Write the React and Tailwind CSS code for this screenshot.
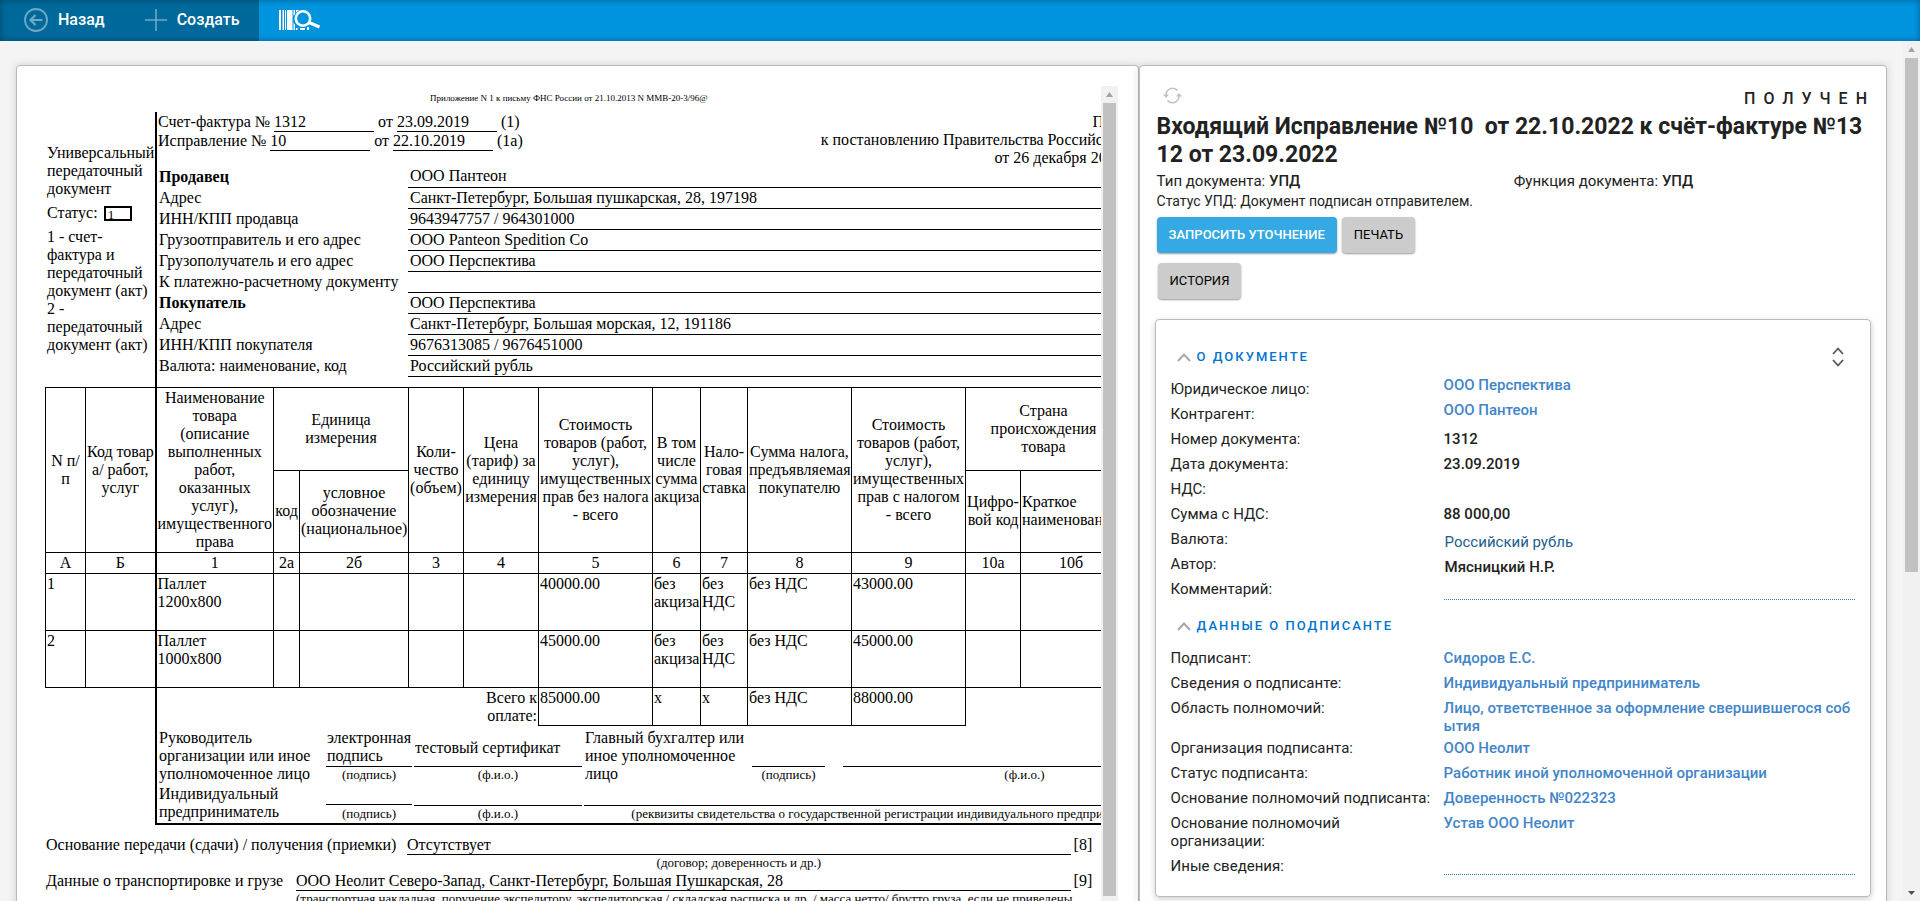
import { Fragment } from "react";
import clsx from "clsx";

const parties = [
  { label: "Продавец", value: "ООО Пантеон", bold: true },
  { label: "Адрес", value: "Санкт-Петербург, Большая пушкарская, 28, 197198" },
  { label: "ИНН/КПП продавца", value: "9643947757 / 964301000" },
  { label: "Грузоотправитель и его адрес", value: "ООО Panteon Spedition Co" },
  { label: "Грузополучатель и его адрес", value: "ООО Перспектива" },
  { label: "К платежно-расчетному документу", value: "" },
  { label: "Покупатель", value: "ООО Перспектива", bold: true },
  { label: "Адрес", value: "Санкт-Петербург, Большая морская, 12, 191186" },
  { label: "ИНН/КПП покупателя", value: "9676313085 / 9676451000" },
  { label: "Валюта: наименование, код", value: "Российский рубль" },
];

const columnWidths = [40, 70, 118, 26, 109, 55, 75, 114, 48, 47, 104, 114, 55, 101, 85];
const columnCodes = ["А", "Б", "1", "2а", "2б", "3", "4", "5", "6", "7", "8", "9", "10а", "10б", "11"];

const goods = [
  ["1", "", "Паллет\n1200x800", "", "", "", "", "40000.00", "без\nакциза", "без\nНДС", "без НДС", "43000.00", "", "", ""],
  ["2", "", "Паллет\n1000x800", "", "", "", "", "45000.00", "без\nакциза", "без\nНДС", "без НДС", "45000.00", "", "", ""],
];

const totals = ["85000.00", "x", "x", "без НДС", "88000.00"];

const documentFields = [
  { label: "Юридическое лицо:", value: "ООО Перспектива", kind: "company" },
  { label: "Контрагент:", value: "ООО Пантеон", kind: "company" },
  { label: "Номер документа:", value: "1312", kind: "text" },
  { label: "Дата документа:", value: "23.09.2019", kind: "text" },
  { label: "НДС:", value: "", kind: "text" },
  { label: "Сумма с НДС:", value: "88 000,00", kind: "text" },
  { label: "Валюта:", value: "Российский рубль", kind: "currency" },
  { label: "Автор:", value: "Мясницкий Н.Р.", kind: "author" },
];

const signerFields = [
  { label: "Подписант:", value: "Сидоров Е.С." },
  { label: "Сведения о подписанте:", value: "Индивидуальный предприниматель" },
  { label: "Область полномочий:", value: "Лицо, ответственное за оформление свершившегося события" },
  { label: "Организация подписанта:", value: "ООО Неолит" },
  { label: "Статус подписанта:", value: "Работник иной уполномоченной организации" },
  { label: "Основание полномочий подписанта:", value: "Доверенность №022323" },
  { label: "Основание полномочий организации:", value: "Устав ООО Неолит" },
];

function Header() {
  return (
    <header className="relative flex h-[41px] shrink-0 bg-[#0094de] text-white">
      <div className="flex w-[259px] items-center bg-[#00699b] pb-px">
        <button type="button" className="flex items-center gap-[10px] pl-6 text-base font-medium">
          <svg width="24" height="24" viewBox="0 0 24 24" fill="none" stroke="#6fa9c6">
            <circle cx="12" cy="12" r="11" strokeWidth="1.8" />
            <path d="M18.5 12H7M11.5 7L6.5 12l5 5" strokeWidth="2.2" />
          </svg>
          Назад
        </button>
        <button type="button" className="flex items-center gap-[10px] pl-10 text-base font-medium">
          <svg width="22" height="22" viewBox="0 0 22 22" fill="none" stroke="#6fa9c6" strokeWidth="1.6">
            <path d="M11 0v22M0 11h22" />
          </svg>
          Создать
        </button>
      </div>
      <button type="button" aria-label="Поиск по штрихкоду" className="pb-px pl-5">
        <svg width="42" height="22" viewBox="0 0 42 22" fill="none">
          <path d="M0 1h2v20H0zM3.500 1h1.500v20H3.500zM6 1h1v20H6zM8 1h5.500v20H8zM14.500 1H16v4l-1.500 2zM14.500 13l1.500 3v5h-1.500zM17 1h3l-3 2.500zM17 19h1.500v2H17zM21 19h5v2h-5zM28 18h2v3h-2z" fill="#fff" />
          <circle cx="24" cy="9.5" r="7.2" stroke="#fff" strokeWidth="2.6" />
          <path d="M30 13.500l10.500 4.500" stroke="#fff" strokeWidth="3" />
        </svg>
      </button>
      <div className="pointer-events-none absolute inset-0 shadow-[inset_0_0_6px_rgba(0,0,0,0.35)]" />
    </header>
  );
}

function ScrollArrow({ down, color }) {
  return (
    <svg width="17" height="17" viewBox="0 0 17 17" className="shrink-0" fill={color}>
      <path d={down ? "M5 7h7l-3.5 4z" : "M5 11h7L8.5 6z"} />
    </svg>
  );
}

function UnderlinedField({ children }) {
  return <span className="h-[19px] w-[100px] border-b border-black">{children}</span>;
}

function Caption({ children, className }) {
  return <div className={clsx("text-center text-[13px] leading-[15px]", className)}>{children}</div>;
}

function InvoiceHead() {
  return (
    <div className="flex">
      <div className="flex w-[110px] shrink-0 flex-col justify-center pl-[2px]">
        <p className="whitespace-pre">{"Универсальный\nпередаточный\nдокумент"}</p>
        <div className="flex h-[30px] items-center gap-[6px]">
          Статус:
          <span className="h-[15px] w-7 border-2 border-black pl-[2px] text-[13px] leading-[13px]">1</span>
        </div>
        <p className="whitespace-pre">{"1 - счет-\nфактура и\nпередаточный\nдокумент (акт)\n2 -\nпередаточный\nдокумент (акт)"}</p>
      </div>
      <div className="flex-1 border-l-2 border-black pb-[10px]">
        <div className="flex h-[54px] justify-between pt-px pl-px">
          <div>
            <div className="flex gap-1">
              Счет-фактура № <UnderlinedField>1312</UnderlinedField> от{" "}
              <UnderlinedField>23.09.2019</UnderlinedField> (1)
            </div>
            <div className="flex gap-1">
              Исправление № <UnderlinedField>10</UnderlinedField> от{" "}
              <UnderlinedField>22.10.2019</UnderlinedField> (1а)
            </div>
          </div>
          <div className="text-right">
            <p>Приложение N 1</p>
            <p>к постановлению Правительства Российской Федерации</p>
            <p>от 26 декабря 2011 года N 1137</p>
          </div>
        </div>
        <table className="w-full">
          <tbody>
            {parties.map((row, i) => (
              <tr key={i}>
                <th className={clsx("w-[251px] py-px pl-[2px] text-left", row.bold ? "font-bold" : "font-normal")}>
                  {row.label}
                </th>
                <td className="h-[21px] border-b border-black py-px pl-[2px]">{row.value}</td>
              </tr>
            ))}
          </tbody>
        </table>
      </div>
    </div>
  );
}

function HeadCell({ children, className, ...rest }) {
  return (
    <th className={clsx("border border-black p-px font-normal whitespace-pre", className)} {...rest}>
      {children}
    </th>
  );
}

function GoodsTable() {
  return (
    <table className="w-full table-fixed border-collapse">
      <colgroup>
        {columnWidths.map((width, i) => (
          <col key={i} style={{ width }} />
        ))}
      </colgroup>
      <thead>
        <tr className="h-[83px]">
          <HeadCell rowSpan={2}>{"N п/\nп"}</HeadCell>
          <HeadCell rowSpan={2}>{"Код товар\nа/ работ,\nуслуг"}</HeadCell>
          <HeadCell rowSpan={2} className="border-l-2">
            {"Наименование\nтовара\n(описание\nвыполненных\nработ,\nоказанных\nуслуг),\nимущественного\nправа"}
          </HeadCell>
          <HeadCell colSpan={2}>{"Единица\nизмерения"}</HeadCell>
          <HeadCell rowSpan={2}>{"Коли-\nчество\n(объем)"}</HeadCell>
          <HeadCell rowSpan={2}>{"Цена\n(тариф) за\nединицу\nизмерения"}</HeadCell>
          <HeadCell rowSpan={2}>{"Стоимость\nтоваров (работ,\nуслуг),\nимущественных\nправ без налога\n- всего"}</HeadCell>
          <HeadCell rowSpan={2}>{"В том\nчисле\nсумма\nакциза"}</HeadCell>
          <HeadCell rowSpan={2}>{"Нало-\nговая\nставка"}</HeadCell>
          <HeadCell rowSpan={2}>{"Сумма налога,\nпредъявляемая\nпокупателю"}</HeadCell>
          <HeadCell rowSpan={2}>{"Стоимость\nтоваров (работ,\nуслуг),\nимущественных\nправ с налогом\n- всего"}</HeadCell>
          <HeadCell colSpan={2}>{"Страна\nпроисхождения\nтовара"}</HeadCell>
          <HeadCell rowSpan={2}>{"Номер\nтаможенной\nдекларации"}</HeadCell>
        </tr>
        <tr className="h-[82px]">
          <HeadCell>код</HeadCell>
          <HeadCell>{"условное\nобозначение\n(национальное)"}</HeadCell>
          <HeadCell>{"Цифро-\nвой код"}</HeadCell>
          <HeadCell className="text-left">{"Краткое\nнаименование"}</HeadCell>
        </tr>
        <tr>
          {columnCodes.map((code, i) => (
            <HeadCell key={code} className={i === 2 && "border-l-2"}>
              {code}
            </HeadCell>
          ))}
        </tr>
      </thead>
      <tbody>
        {goods.map((row) => (
          <tr key={row[0]} className="h-[57px]">
            {row.map((cell, i) => (
              <td
                key={i}
                className={clsx("border border-black p-px align-top whitespace-pre", i === 2 && "border-l-2")}
              >
                {cell}
              </td>
            ))}
          </tr>
        ))}
        <tr>
          <td colSpan={2} />
          <td colSpan={4} className="border-l-2 border-black" />
          <td className="p-px text-right whitespace-pre">{"Всего к\nоплате:"}</td>
          {totals.map((cell, i) => (
            <td key={i} className="border border-black p-px align-top">
              {cell}
            </td>
          ))}
        </tr>
      </tbody>
    </table>
  );
}

function Signatures() {
  return (
    <div className="ml-[110px] border-b-2 border-l-2 border-black pt-[3px] pb-[2px] pl-[2px]">
      <div className="grid grid-cols-[165px_86px_168px_166px_73px_14px_1fr] gap-x-[2px]">
        <p className="row-span-2 whitespace-pre">{"Руководитель\nорганизации или иное\nуполномоченное лицо"}</p>
        <p className="h-[38px] border-b border-black pl-px whitespace-pre">{"электронная\nподпись"}</p>
        <p className="flex h-[38px] items-center border-b border-black pl-px">тестовый сертификат</p>
        <p className="row-span-2 pl-px whitespace-pre">{"Главный бухгалтер или\nиное уполномоченное\nлицо"}</p>
        <p className="border-b border-black" />
        <p />
        <p className="border-b border-black" />
        <Caption className="h-[18px]">(подпись)</Caption>
        <Caption>(ф.и.о.)</Caption>
        <Caption>(подпись)</Caption>
        <p />
        <Caption>(ф.и.о.)</Caption>
      </div>
      <div className="grid grid-cols-[165px_86px_168px_1fr] gap-x-[2px]">
        <p className="row-span-2 whitespace-pre">{"Индивидуальный\nпредприниматель"}</p>
        <p className="h-5 border-b border-black" />
        <p className="border-b border-black" />
        <p className="border-b border-black" />
        <Caption>(подпись)</Caption>
        <Caption>(ф.и.о.)</Caption>
        <Caption>(реквизиты свидетельства о государственной регистрации индивидуального предпринимателя)</Caption>
      </div>
    </div>
  );
}

function InvoiceDocument() {
  return (
    <div className="h-[843px] min-w-0 flex-1 overflow-hidden pt-[5px] pl-2 font-['Liberation_Serif',serif] text-base leading-[18px] text-black">
      <p className="pr-2 text-center text-[9px] leading-[14px]">
        Приложение N 1 к письму ФНС России от 21.10.2013 N ММВ-20-3/96@
      </p>
      <div className="mt-[7px] w-[1161px]">
        <InvoiceHead />
        <GoodsTable />
        <Signatures />
      </div>
      <div className="mt-[11px] mr-3 flex flex-col gap-[2px] pl-px">
        <div className="flex">
          <p className="w-[361px] shrink-0">Основание передачи (сдачи) / получения (приемки)</p>
          <div className="flex-1">
            <p className="border-b border-black">Отсутствует</p>
            <Caption>(договор; доверенность и др.)</Caption>
          </div>
          <p className="w-[18px] pl-[3px]">[8]</p>
        </div>
        <div className="flex">
          <p className="w-[250px] shrink-0">Данные о транспортировке и грузе</p>
          <div className="min-w-0 flex-1">
            <p className="border-b border-black">ООО Неолит Северо-Запад, Санкт-Петербург, Большая Пушкарская, 28</p>
            <Caption className="whitespace-nowrap">
              (транспортная накладная, поручение экспедитору, экспедиторская / складская расписка и др. / масса нетто/
              брутто груза, если не приведены
            </Caption>
          </div>
          <p className="w-[18px] pl-[3px]">[9]</p>
        </div>
      </div>
    </div>
  );
}

function SectionTitle({ children }) {
  return (
    <h2 className="flex items-center gap-[6px] pl-[6px] text-[13px] leading-5 font-medium tracking-[2px] text-[#0074cd]">
      <svg width="14" height="9" viewBox="0 0 14 9" fill="none" stroke="#a8a8a8" strokeWidth="2">
        <path d="M1 8l6-6.5L13 8" />
      </svg>
      {children}
    </h2>
  );
}

function FieldValue({ field }) {
  if (field.kind === "company") {
    return (
      <a href="#" className="self-start font-medium text-[#4285c8]">
        {field.value}
      </a>
    );
  }
  if (field.kind === "currency") {
    return (
      <a href="#" className="self-end pl-px text-[#1c5d8c]">
        {field.value}
      </a>
    );
  }
  return (
    <span className={clsx("font-medium", field.kind === "author" ? "self-end pl-px" : "self-center")}>
      {field.value}
    </span>
  );
}

function DetailsCard() {
  return (
    <section className="rounded border border-[#bbb] px-[15px] pt-[27px] pb-[21px] text-[15px] leading-[18px] shadow-[0_2px_6px_rgba(0,0,0,0.2)]">
      <div className="flex items-center justify-between pr-[11px]">
        <SectionTitle>О ДОКУМЕНТЕ</SectionTitle>
        <button type="button" aria-label="Развернуть">
          <svg width="12" height="20" viewBox="0 0 12 20" fill="none" stroke="#555" strokeWidth="1.8">
            <path d="M1 7l5-5.5L11 7M1 13l5 5.5L11 13" />
          </svg>
        </button>
      </div>
      <div className="mt-[9px] grid auto-rows-[25px] grid-cols-[273px_1fr]">
        {documentFields.map((field) => (
          <Fragment key={field.label}>
            <span className="self-center">{field.label}</span>
            <FieldValue field={field} />
          </Fragment>
        ))}
        <label htmlFor="comment" className="self-center">
          Комментарий:
        </label>
        <input id="comment" className="h-6 border-b border-dotted border-[#2f7fb8] outline-none" />
      </div>
      <div className="mt-[15px]">
        <SectionTitle>ДАННЫЕ О ПОДПИСАНТЕ</SectionTitle>
      </div>
      <div className="mt-[13px] grid grid-cols-[273px_1fr]">
        {signerFields.map((field) => (
          <Fragment key={field.label}>
            <span className="min-h-[25px] pr-2 pb-[7px]">{field.label}</span>
            <a href="#" className="pb-1 font-medium break-all text-[#4285c8]">
              {field.value}
            </a>
          </Fragment>
        ))}
        <label htmlFor="other">Иные сведения:</label>
        <input id="other" className="h-[18px] border-b border-dotted border-[#2f7fb8] outline-none" />
      </div>
    </section>
  );
}

function DocumentPanel() {
  return (
    <section className="w-2/5 rounded border border-[#bbb] bg-white px-[15px] pt-[21px] pb-6 text-[#222] shadow-[0_0_8px_rgba(0,0,0,0.15)]">
      <div className="flex items-start justify-between pl-2">
        <button type="button" aria-label="Обновить">
          <svg width="19" height="17" viewBox="0 0 19 17" fill="none" stroke="#c2c2c2" strokeWidth="1.6">
            <path d="M3 9.500C2.500 4.500 5.500 1.200 9.500 1.200c2.500 0 4 1 5 2.300M16 7.500c.5 5-2.500 8.300-6.500 8.300-2.500 0-4-1-5-2.300" />
            <path d="M0 7.500h6L3 11zM13 9.500h6L16 6z" fill="#c2c2c2" stroke="none" />
          </svg>
        </button>
        <span className="-mr-1 pt-[2px] pb-1 text-base leading-5 font-medium tracking-[8px]">ПОЛУЧЕН</span>
      </div>
      <div className="pl-[2px]">
        <h1 className="text-[23px] leading-7 font-bold break-all">
          Входящий Исправление №10&nbsp; от 22.10.2022 к счёт-фактуре №1312 от 23.09.2022
        </h1>
        <div className="mt-[2px] grid grid-cols-2 text-[15px] leading-5">
          <p>
            Тип документа: <span className="font-medium">УПД</span>
          </p>
          <p>
            Функция документа: <span className="font-medium">УПД</span>
          </p>
        </div>
        <p className="text-sm leading-5">Статус УПД: Документ подписан отправителем.</p>
        <div className="mt-[6px] flex gap-[5px]">
          <button
            type="button"
            className="h-9 rounded-sm bg-[#34a9e3] px-3 text-[13px] font-medium text-white shadow-[0_1px_2px_rgba(0,0,0,0.4)]"
          >
            ЗАПРОСИТЬ УТОЧНЕНИЕ
          </button>
          <button
            type="button"
            className="h-9 rounded-sm bg-[#ccc] px-3 text-[13px] text-black shadow-[0_1px_2px_rgba(0,0,0,0.4)]"
          >
            ПЕЧАТЬ
          </button>
        </div>
        <button
          type="button"
          className="mt-[10px] ml-px h-9 rounded-sm bg-[#ccc] px-3 text-[13px] text-black shadow-[0_1px_2px_rgba(0,0,0,0.4)]"
        >
          ИСТОРИЯ
        </button>
      </div>
      <div className="mt-5">
        <DetailsCard />
      </div>
    </section>
  );
}

export default function App() {
  return (
    <div className="flex h-screen flex-col overflow-hidden bg-[#f4f4f4] font-['Roboto',sans-serif]">
      <Header />
      <div className="flex min-h-0 flex-1">
        <main className="flex min-w-0 flex-1 items-start overflow-hidden px-4 pt-6">
          <section className="flex w-3/5 rounded border border-[#bbb] bg-white p-5 shadow-[0_0_8px_rgba(0,0,0,0.15)]">
            <InvoiceDocument />
            <div className="w-[17px] shrink-0 bg-[#f1f1f1]">
              <ScrollArrow color="#a3a3a3" />
              <div className="mx-[2px] h-[793px] bg-[#c1c1c1]" />
            </div>
          </section>
          <DocumentPanel />
        </main>
        <div className="flex w-[17px] shrink-0 flex-col justify-between bg-[#f1f1f1]">
          <div className="flex min-h-0 flex-1 flex-col">
            <ScrollArrow color="#a3a3a3" />
            <div className="mx-[2px] h-[61%] bg-[#c1c1c1]" />
          </div>
          <ScrollArrow down color="#505050" />
        </div>
      </div>
    </div>
  );
}
